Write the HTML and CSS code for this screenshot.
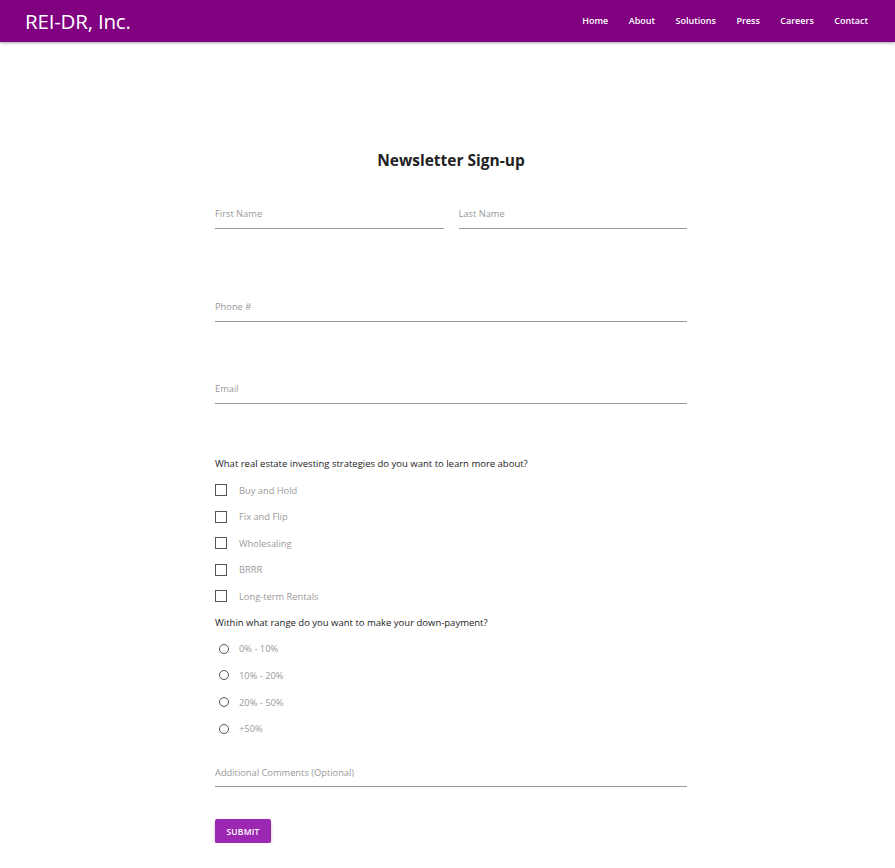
FILE: index.html
```html
<!DOCTYPE html>
<html lang="en">
<head>
<meta charset="utf-8">
<title>REI-DR, Inc. — Newsletter Sign-up</title>
<link rel="stylesheet" href="styles.css">
</head>
<body>
<header class="topbar">
  <div class="brand">REI-DR, Inc.</div>
  <nav class="nav">
    <a href="#">Home</a>
    <a href="#">About</a>
    <a href="#">Solutions</a>
    <a href="#">Press</a>
    <a href="#">Careers</a>
    <a href="#">Contact</a>
  </nav>
</header>
<main class="page">
  <h1 class="title">Newsletter Sign-up</h1>
  <form class="form">
    <div class="row">
      <div class="field"><span class="placeholder">First Name</span></div>
      <div class="field"><span class="placeholder">Last Name</span></div>
    </div>
    <div class="field field-phone"><span class="placeholder">Phone #</span></div>
    <div class="field field-email"><span class="placeholder">Email</span></div>

    <p class="question q-strategies">What real estate investing strategies do you want to learn more about?</p>
    <ul class="options">
      <li class="option"><span class="box"></span><span class="opt-label">Buy and Hold</span></li>
      <li class="option"><span class="box"></span><span class="opt-label">Fix and Flip</span></li>
      <li class="option"><span class="box"></span><span class="opt-label">Wholesaling</span></li>
      <li class="option"><span class="box"></span><span class="opt-label">BRRR</span></li>
      <li class="option"><span class="box"></span><span class="opt-label">Long-term Rentals</span></li>
    </ul>

    <p class="question q-range">Within what range do you want to make your down-payment?</p>
    <ul class="options radios">
      <li class="option"><span class="radio"></span><span class="opt-label">0% - 10%</span></li>
      <li class="option"><span class="radio"></span><span class="opt-label">10% - 20%</span></li>
      <li class="option"><span class="radio"></span><span class="opt-label">20% - 50%</span></li>
      <li class="option"><span class="radio"></span><span class="opt-label">+50%</span></li>
    </ul>

    <div class="field field-comments"><span class="placeholder">Additional Comments (Optional)</span></div>

    <button type="button" class="submit">SUBMIT</button>
  </form>
</main>
</body>
</html>
```

FILE: styles.css
```css
* { box-sizing: border-box; }

html, body {
  margin: 0;
  padding: 0;
  background: #fff;
  font-family: "Open Sans", "Noto Sans", "Liberation Sans", sans-serif;
  color: #222;
}

.topbar {
  height: 42px;
  background: #800080;
  display: flex;
  align-items: center;
  justify-content: space-between;
  padding: 0 27px 0 25px;
  box-shadow: 0 1px 3px rgba(0, 0, 0, 0.35);
}

.brand {
  color: #fff;
  font-size: 20.5px;
  letter-spacing: -0.2px;
  line-height: 22px;
}

.nav {
  display: flex;
  gap: 20.5px;
}

.nav a {
  color: #fff;
  text-decoration: none;
  font-size: 9px;
  font-weight: 600;
  line-height: 14px;
}

.page {
  width: 472px;
  margin-left: 215px;
}

.title {
  margin: 108px 0 0;
  font-size: 15.5px;
  line-height: 20px;
  font-weight: 700;
  text-align: center;
  color: #222;
}

.form {
  display: flex;
  flex-direction: column;
  align-items: stretch;
}

.row {
  display: flex;
  gap: 15px;
  margin-top: 37px;
}

.row .field { flex: 1; }

.field {
  height: 22px;
  border-bottom: 1px solid #999;
}

.placeholder {
  display: block;
  font-size: 9.3px;
  line-height: 14px;
  color: #999;
}

.field-phone { margin-top: 71px; }
.field-email { margin-top: 60px; }
.field-comments { margin-top: 24px; height: 21px; }

.question {
  margin: 0;
  font-size: 9.5px;
  line-height: 14px;
  color: #222;
}

.q-strategies { margin-top: 53px; }
.q-range { margin-top: 6px; }

.options {
  list-style: none;
  margin: 6px 0 0;
  padding: 0;
}

.option {
  display: flex;
  align-items: center;
  height: 26.5px;
}

.radios .option { height: 26.67px; }

.box {
  width: 12px;
  height: 12px;
  border: 1px solid #555;
  flex: none;
}

.radio {
  width: 10px;
  height: 10px;
  border: 1px solid #555;
  border-radius: 50%;
  margin-left: 4px;
  flex: none;
}

.opt-label {
  margin-left: 12px;
  font-size: 9.3px;
  color: #9a9a9a;
}

.radios .opt-label { margin-left: 10px; }

.submit {
  align-self: flex-start;
  margin-top: 32px;
  width: 56px;
  height: 24px;
  border: 0;
  border-radius: 2px;
  background: #9c27b0;
  color: #fff;
  font-family: inherit;
  font-size: 8.5px;
  font-weight: 600;
  letter-spacing: 0.2px;
  padding: 0;
  box-shadow: 0 2px 3px rgba(0, 0, 0, 0.3);
}
```
